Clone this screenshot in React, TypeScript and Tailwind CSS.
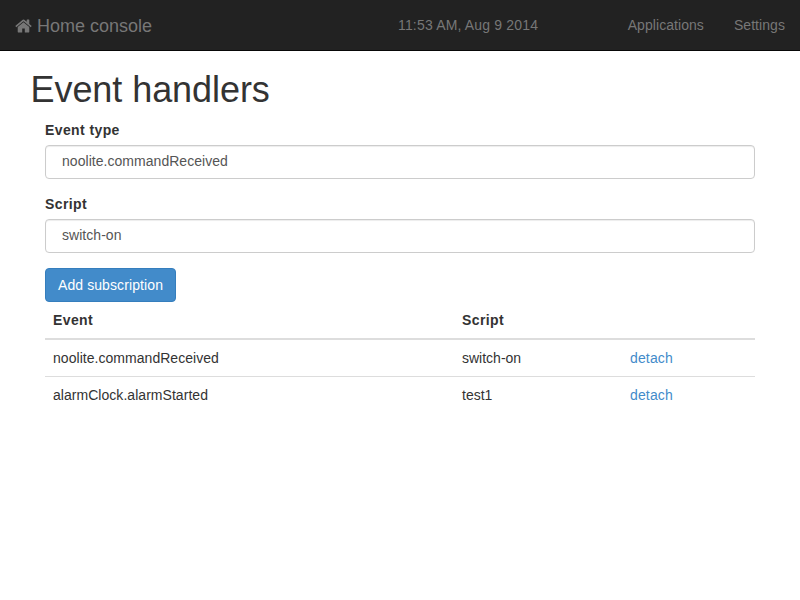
const rows = [
  { event: "noolite.commandReceived", script: "switch-on" },
  { event: "alarmClock.alarmStarted", script: "test1" },
];

function HomeIcon() {
  return (
    <svg viewBox="64 0 1664 1792" className="h-[18px] w-[17px]" fill="currentColor">
      <path d="M1472 992v480q0 26-19 45t-45 19h-384v-384h-256v384h-384q-26 0-45-19t-19-45v-480q0-1 .5-3t.5-3l575-474 575 474q1 2 1 6zm223-69l-62 74q-8 9-21 11h-3q-13 0-21-7l-692-577-692 577q-12 8-24 7-13-2-21-11l-62-74q-8-10-7-23.5t11-21.5l719-599q32-26 76-26t76 26l244 204v-195q0-14 9-23t23-9h192q14 0 23 9t9 23v408l219 182q10 8 11 21.5t-7 23.5z" />
    </svg>
  );
}

function Field({ label, value, className }: { label: string; value: string; className: string }) {
  return (
    <div className={className}>
      <label className="mb-[5px] block font-bold tracking-[0.4px]">{label}</label>
      <input
        className="block h-[34px] w-full rounded-[4px] border border-[#ccc] bg-white px-4 pt-1 pb-[6px] tracking-[0.04px] text-[#555] shadow-[inset_0_1px_1px_rgba(0,0,0,0.075)] outline-none"
        defaultValue={value}
      />
    </div>
  );
}

export default function App() {
  return (
    <div className="min-h-[600px] bg-white font-['Liberation_Sans',Arial,sans-serif] text-[14px] leading-[20px] text-[#333]">
      <nav className="flex h-[51px] items-center border-b border-[#080808] bg-[#222] px-[15px] text-[#777]">
        <a className="flex w-[383px] items-center gap-[5px] pt-[2px] text-[18px]">
          <HomeIcon />
          Home console
        </a>
        <span className="tracking-[0.17px]">11:53 AM, Aug 9 2014</span>
        <div className="ml-auto flex gap-[30px]">
          <a className="tracking-[0.06px]">Applications</a>
          <a className="tracking-[0.06px]">Settings</a>
        </div>
      </nav>
      <main className="px-[30px] pt-[19px]">
        <h1 className="mb-[10px] pl-[0.5px] text-[36px] leading-[40px] font-medium tracking-[-0.06px]">Event handlers</h1>
        <div className="px-[15px]">
          <Field label="Event type" value="noolite.commandReceived" className="mb-[15px]" />
          <Field label="Script" value="switch-on" className="mb-[15px]" />
          <button className="block h-[34px] w-[131px] rounded-[4px] border border-[#357ebd] bg-[#428bca] tracking-[0.1px] text-white">
            Add subscription
          </button>
          <table className="w-full table-fixed border-collapse text-left">
            <colgroup>
              <col className="w-[409px]" />
              <col className="w-[168px]" />
              <col />
            </colgroup>
            <thead>
              <tr className="border-b-2 border-[#ddd] tracking-[0.4px]">
                <th className="p-2">Event</th>
                <th className="p-2">Script</th>
                <th className="p-2" />
              </tr>
            </thead>
            <tbody>
              {rows.map((r) => (
                <tr key={r.event} className="border-b border-[#ddd] tracking-[0.04px] last:border-b-0">
                  <td className="p-2">{r.event}</td>
                  <td className="p-2 tracking-normal">{r.script}</td>
                  <td className="p-2 tracking-[0.15px] text-[#428bca]">detach</td>
                </tr>
              ))}
            </tbody>
          </table>
        </div>
      </main>
    </div>
  );
}
